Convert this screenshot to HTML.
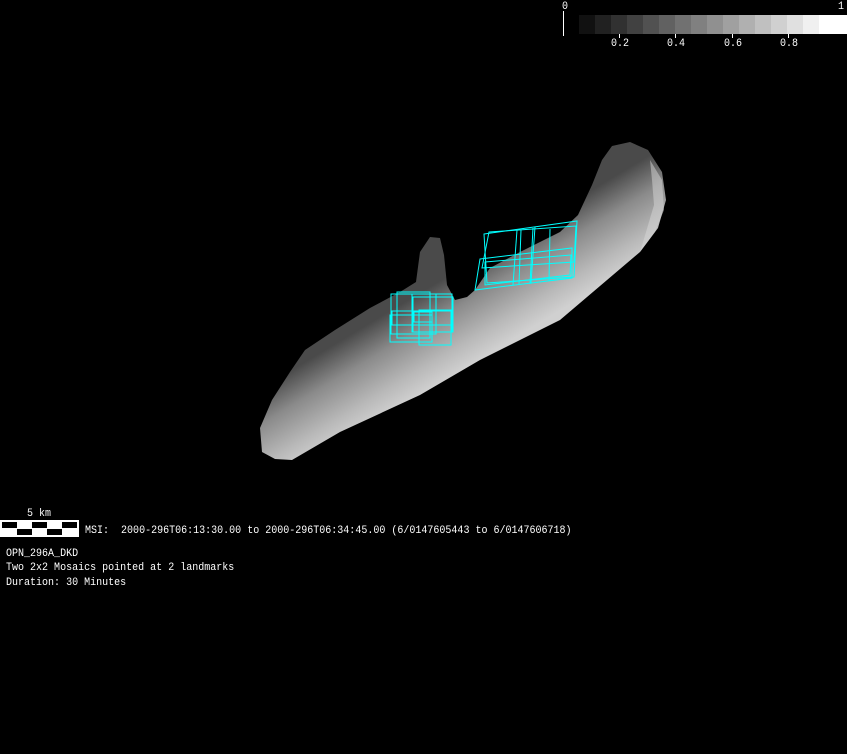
<!DOCTYPE html>
<html><head><meta charset="utf-8"><style>
html,body{margin:0;padding:0;background:#000;}
body{width:847px;height:754px;position:relative;overflow:hidden;font-family:"Liberation Mono",monospace;color:#fff;}
.t{position:absolute;font-size:11px;line-height:13px;white-space:pre;color:#fff;transform:scaleX(0.91);transform-origin:0 0;}
</style></head><body>
<svg width="847" height="754" style="position:absolute;left:0;top:0">
<defs>
<linearGradient id="g" gradientUnits="userSpaceOnUse" x1="425" y1="290" x2="470" y2="365">
<stop offset="0" stop-color="#4a4a4a"/>
<stop offset="0.35" stop-color="#8a8a8a"/>
<stop offset="0.75" stop-color="#b8b8b8"/>
<stop offset="1" stop-color="#d0d0d0"/>
</linearGradient>
</defs>
<g>
<rect x="579" y="15" width="16" height="19" fill="#111"/>
<rect x="595" y="15" width="16" height="19" fill="#212121"/>
<rect x="611" y="15" width="16" height="19" fill="#313131"/>
<rect x="627" y="15" width="16" height="19" fill="#414141"/>
<rect x="643" y="15" width="16" height="19" fill="#515151"/>
<rect x="659" y="15" width="16" height="19" fill="#616161"/>
<rect x="675" y="15" width="16" height="19" fill="#717171"/>
<rect x="691" y="15" width="16" height="19" fill="#808080"/>
<rect x="707" y="15" width="16" height="19" fill="#909090"/>
<rect x="723" y="15" width="16" height="19" fill="#a0a0a0"/>
<rect x="739" y="15" width="16" height="19" fill="#b0b0b0"/>
<rect x="755" y="15" width="16" height="19" fill="#c0c0c0"/>
<rect x="771" y="15" width="16" height="19" fill="#d0d0d0"/>
<rect x="787" y="15" width="16" height="19" fill="#e0e0e0"/>
<rect x="803" y="15" width="16" height="19" fill="#f0f0f0"/>
<rect x="819" y="15" width="28" height="19" fill="#fff"/>
<line x1="563.5" y1="11" x2="563.5" y2="36" stroke="#fff"/>
<line x1="619.5" y1="34" x2="619.5" y2="38" stroke="#fff"/>
<line x1="675.5" y1="34" x2="675.5" y2="38" stroke="#fff"/>
<line x1="732.5" y1="34" x2="732.5" y2="38" stroke="#fff"/>
<line x1="788.5" y1="34" x2="788.5" y2="38" stroke="#fff"/>
</g>
<polygon fill="url(#g)" points="262,452 275,459 292,460 340,432 420,395 480,360 560,320 640,252 658,228 666,200 662,172 648,150 630,142 612,146 602,160 592,185 578,215 560,232 520,252 490,268 475,290 467,297 455,300 447,285 444,255 440,238 430,237 420,252 416,282 400,292 370,308 335,330 305,350 290,372 272,400 260,428"/>
<polygon fill="#d8d8d8" opacity="0.5" points="650,160 662,180 664,210 655,232 640,252 646,232 654,205 652,180"/>
<g fill="none" stroke="#0ff" stroke-width="1">
<rect x="391" y="294" width="45" height="40"/>
<rect x="397" y="292" width="33" height="46"/>
<rect x="412" y="294" width="40" height="38"/>
<rect x="413" y="297" width="40" height="35"/>
<rect x="392" y="311" width="60" height="14"/>
<rect x="390" y="315" width="42" height="27"/>
<rect x="419" y="310" width="32" height="35"/>
<rect x="414" y="312" width="18" height="10"/>
<polygon points="484,234 577,221 574,277 487,283"/>
<polygon points="489,232 576,226 574,262 482,268"/>
<polygon points="480,259 572,248 572,278 475,290"/>
<polygon points="485,262 571,255 570,275 485,285"/>
<line x1="517" y1="230" x2="513" y2="285"/>
<line x1="521" y1="230" x2="519" y2="284"/>
<line x1="533" y1="228" x2="530" y2="284"/>
<line x1="535" y1="227" x2="531" y2="283"/>
<line x1="550" y1="229" x2="549" y2="281"/>
</g>
<rect x="0" y="520" width="79" height="17" fill="#fff"/>
<rect x="2" y="522" width="15" height="6" fill="#000"/>
<rect x="32" y="522" width="15" height="6" fill="#000"/>
<rect x="62" y="522" width="15" height="6" fill="#000"/>
<rect x="17" y="529" width="15" height="6" fill="#000"/>
<rect x="47" y="529" width="15" height="6" fill="#000"/>
</svg>
<div class="t" style="left:562px;top:1px">0</div>
<div class="t" style="left:838px;top:1px">1</div>
<div class="t" style="left:611px;top:38px">0.2</div>
<div class="t" style="left:667px;top:38px">0.4</div>
<div class="t" style="left:724px;top:38px">0.6</div>
<div class="t" style="left:780px;top:38px">0.8</div>
<div class="t" style="left:27px;top:508px">5 km</div>
<div class="t" style="left:85px;top:525px">MSI:  2000-296T06:13:30.00 to 2000-296T06:34:45.00 (6/0147605443 to 6/0147606718)</div>
<div class="t" style="left:6px;top:548px">OPN_296A_DKD</div>
<div class="t" style="left:6px;top:562px">Two 2x2 Mosaics pointed at 2 landmarks</div>
<div class="t" style="left:6px;top:577px">Duration: 30 Minutes</div>
</body></html>
